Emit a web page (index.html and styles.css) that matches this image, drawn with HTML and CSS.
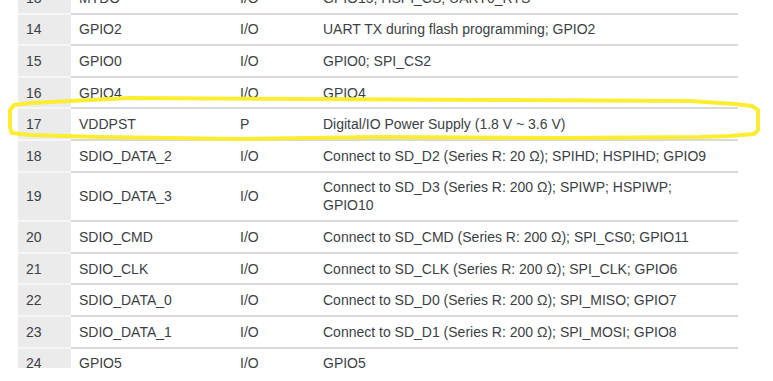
FILE: index.html
```html
<!DOCTYPE html>
<html>
<head>
<meta charset="utf-8">
<link rel="stylesheet" href="styles.css">
</head>
<body>
<div class="viewport">
  <table class="pins">
    <tbody>
      <tr><td class="num">13</td><td>MTDO</td><td>I/O</td><td>GPIO15; HSPI_CS; UART0_RTS</td></tr>
      <tr><td class="num">14</td><td>GPIO2</td><td>I/O</td><td>UART TX during flash programming; GPIO2</td></tr>
      <tr><td class="num">15</td><td>GPIO0</td><td>I/O</td><td>GPIO0; SPI_CS2</td></tr>
      <tr><td class="num">16</td><td>GPIO4</td><td>I/O</td><td>GPIO4</td></tr>
      <tr><td class="num">17</td><td>VDDPST</td><td>P</td><td>Digital/IO Power Supply (1.8 V ~ 3.6 V)</td></tr>
      <tr><td class="num">18</td><td>SDIO_DATA_2</td><td>I/O</td><td>Connect to SD_D2 (Series R: 20 Ω); SPIHD; HSPIHD; GPIO9</td></tr>
      <tr><td class="num">19</td><td>SDIO_DATA_3</td><td>I/O</td><td>Connect to SD_D3 (Series R: 200 Ω); SPIWP; HSPIWP;<br>GPIO10</td></tr>
      <tr><td class="num">20</td><td>SDIO_CMD</td><td>I/O</td><td>Connect to SD_CMD (Series R: 200 Ω); SPI_CS0; GPIO11</td></tr>
      <tr><td class="num">21</td><td>SDIO_CLK</td><td>I/O</td><td>Connect to SD_CLK (Series R: 200 Ω); SPI_CLK; GPIO6</td></tr>
      <tr><td class="num">22</td><td>SDIO_DATA_0</td><td>I/O</td><td>Connect to SD_D0 (Series R: 200 Ω); SPI_MISO; GPIO7</td></tr>
      <tr><td class="num">23</td><td>SDIO_DATA_1</td><td>I/O</td><td>Connect to SD_D1 (Series R: 200 Ω); SPI_MOSI; GPIO8</td></tr>
      <tr><td class="num">24</td><td>GPIO5</td><td>I/O</td><td>GPIO5</td></tr>
    </tbody>
  </table>
  <svg class="mark" width="773" height="381" viewBox="0 0 773 381">
    <path d="M30 103 L130 98 L300 99 L500 100 L690 101 L735 104 L752 106 L758 110 L758 130 L754 134 L730 136 L700 137 L560 138 L380 137 L240 139 L100 137 L30 135 L12 133 L10 128 L10 110 L14 105 Z" fill="none" stroke="#fbee31" stroke-width="4" stroke-linejoin="round"/>
  </svg>
</div>
</body>
</html>
```

FILE: styles.css
```css
html, body {
  margin: 0;
  padding: 0;
  background: #ffffff;
}
.viewport {
  position: relative;
  width: 773px;
  height: 368px;
  overflow: hidden;
  padding-left: 18px;
  box-sizing: border-box;
}
.pins {
  width: 720px;
  border-collapse: collapse;
  margin-top: -19px;
  font-family: "Liberation Sans", Arial, sans-serif;
  font-size: 14px;
  color: #3c3f45;
}
.pins td {
  border-top: 2px solid #d9d9d9;
  padding: 5.8px 8px;
  line-height: 18px;
  vertical-align: middle;
  text-align: left;
}
.pins td:nth-child(2) { width: 145px; }
.pins td:nth-child(3) { width: 67px; }
.pins td.num {
  width: 37px;
  background: #ebebeb;
  border-top-color: #f6f6f6;
}
.mark {
  position: absolute;
  left: 0;
  top: 0;
  pointer-events: none;
}
```
